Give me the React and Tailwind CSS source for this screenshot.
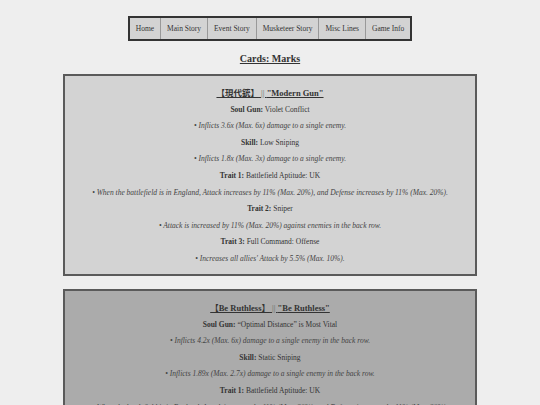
const navItems = ["Home", "Main Story", "Event Story", "Musketeer Story", "Misc Lines", "Game Info"];

const cards = [
  {
    jp: "【現代銃】",
    en: "\"Modern Gun\"",
    bg: "bg-[#d3d3d3]",
    rows: [
      { label: "Soul Gun:", value: "Violet Conflict" },
      { note: "• Inflicts 3.6x (Max. 6x) damage to a single enemy." },
      { label: "Skill:", value: "Low Sniping" },
      { note: "• Inflicts 1.8x (Max. 3x) damage to a single enemy." },
      { label: "Trait 1:", value: "Battlefield Aptitude: UK" },
      { note: "• When the battlefield is in England, Attack increases by 11% (Max. 20%), and Defense increases by 11% (Max. 20%)." },
      { label: "Trait 2:", value: "Sniper" },
      { note: "• Attack is increased by 11% (Max. 20%) against enemies in the back row." },
      { label: "Trait 3:", value: "Full Command: Offense" },
      { note: "• Increases all allies' Attack by 5.5% (Max. 10%)." },
    ],
  },
  {
    jp: "【Be Ruthless】",
    en: "\"Be Ruthless\"",
    bg: "bg-[#ababab]",
    rows: [
      { label: "Soul Gun:", value: "“Optimal Distance” is Most Vital" },
      { note: "• Inflicts 4.2x (Max. 6x) damage to a single enemy in the back row." },
      { label: "Skill:", value: "Static Sniping" },
      { note: "• Inflicts 1.89x (Max. 2.7x) damage to a single enemy in the back row." },
      { label: "Trait 1:", value: "Battlefield Aptitude: UK" },
      { note: "• When the battlefield is in England, Attack increases by 11% (Max. 20%), and Defense increases by 11% (Max. 20%)." },
      { label: "Trait 2:", value: "Sniper" },
      { note: "• Attack is increased by 11% (Max. 20%) against enemies in the back row." },
    ],
  },
];

function Card({ card }) {
  return (
    <div className={`w-[414px] mx-auto border-2 border-[#5a5a5a] ${card.bg} pt-[12px] pb-[11px] flex flex-col items-center gap-[7.6px]`}>
      <div className="text-[8.5px] leading-[11px] font-bold text-[#333] underline -mb-[2px]">
        <span>{card.jp}</span>
        <span className="font-normal text-[#666]"> || </span>
        <span>{card.en}</span>
      </div>
      {card.rows.map((r, i) =>
        r.note ? (
          <p key={i} className="text-[7.5px] leading-[9px] italic text-[#444] text-center">{r.note}</p>
        ) : (
          <p key={i} className="text-[7.5px] leading-[9px] text-[#333] text-center">
            <b className="font-bold">{r.label}</b> {r.value}
          </p>
        )
      )}
    </div>
  );
}

export default function App() {
  return (
    <div className="min-h-screen bg-[#eeeeee] pt-[16px] font-[family-name:'Liberation_Serif','Noto_Sans_CJK_JP',serif]">
      <div className="flex justify-center">
        <div className="flex border-2 border-[#333] bg-[#d3d3d3]">
          {navItems.map((n, i) => (
            <div
              key={n}
              className={`px-[6px] py-[6px] text-[7.5px] leading-[9px] text-[#333] ${i > 0 ? "border-l border-[#999]" : ""}`}
            >
              {n}
            </div>
          ))}
        </div>
      </div>
      <h1 className="mt-[12px] text-center text-[10px] leading-[12px] font-bold text-[#333] underline">Cards: Marks</h1>
      <div className="mt-[9px] flex flex-col gap-[13px]">
        {cards.map((c, i) => (
          <Card key={i} card={c} />
        ))}
      </div>
    </div>
  );
}
